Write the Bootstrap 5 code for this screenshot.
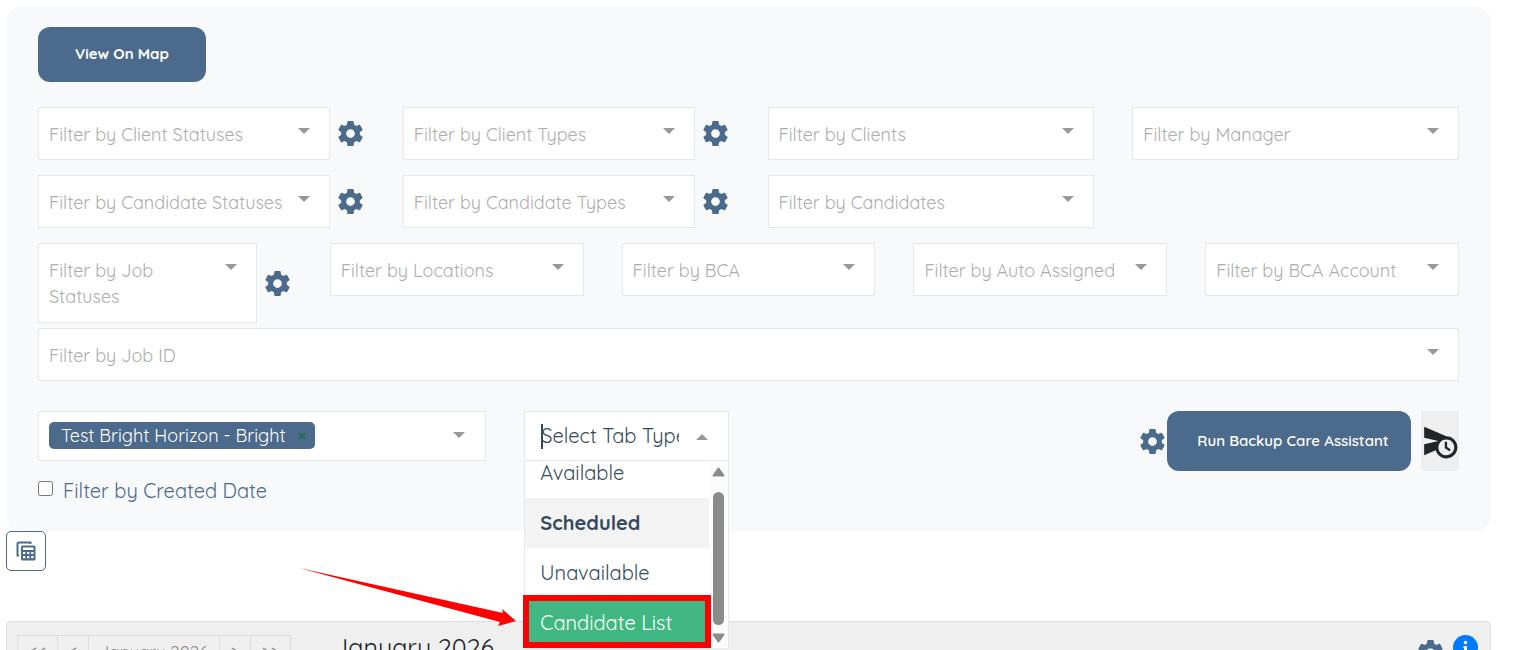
<!DOCTYPE html>
<html lang="en">
<head>
<meta charset="utf-8">
<meta name="viewport" content="width=device-width, initial-scale=1">
<title>Scheduler</title>
<link href="https://cdn.jsdelivr.net/npm/bootstrap@5.3.0/dist/css/bootstrap.min.css" rel="stylesheet">
<style>
  :root { --brand: #4c6a8c; --line: #e8e8e8; }
  body { font-family: Quicksand, Lato, "Open Sans", sans-serif; background: #fff; color: #212529; }
  .page { padding: 7px 26px 0 6px; }
  .filter-panel { background: #f8f9fb; border-radius: 15px; padding: 20px 32px 25px; }
  .filter-row { --bs-gutter-x: 38px; margin-bottom: 15px; }
  .filter-row.tight { margin-bottom: 5px; }
  .filter-row.loose { margin-bottom: 30px; }
  .btn-brand { background: var(--brand); color: #fff; font-size: 15px; font-weight: 600; border: 0; border-radius: 12px; }
  .btn-brand:hover { background: #3f5a78; color: #fff; }
  .btn-map { height: 55px; padding: 0 37px; margin-bottom: 25px; font-weight: 700; }
  .btn-run { height: 60px; width: 244px; padding: 0 0 0 8px; }
  .pick {
    display: block; width: 100%; min-width: 0; min-height: 53px; text-align: left; color: #adadad; font-size: 18px; line-height: 26px;
    border: 1px solid var(--line); border-radius: 0; padding: 13px 46px 11px 10px; appearance: none;
    background: #fff url("data:image/svg+xml,%3Csvg xmlns='http://www.w3.org/2000/svg' viewBox='0 0 12 6'%3E%3Cpath d='M0 0h12L6 6z' fill='%23999'/%3E%3C/svg%3E") no-repeat right 19px top 20px / 12px 6px;
  }
  .pick.two-line { min-height: 80px; }
  .gear { width: 27px; height: 27px; padding: 0; border: 0; background: none; color: var(--brand); flex: none; text-align: left; line-height: 1; }
  .gear svg { width: 25px; height: 25px; display: block; }
  .pick.tag-box { min-height: 50px; height: 50px; padding: 10px; background-position: right 20px top 20px; }
  .tag { display: inline-flex; align-items: center; height: 27px; padding: 0 9px 0 12px; gap: 12px; background: var(--brand); color: #fff; border-radius: 5px; font-size: 18px; white-space: nowrap; vertical-align: top; }
  .tag button { border: 0; background: none; padding: 0; width: 8px; height: 8px; line-height: 0; color: #266d4d; }
  .tag svg { width: 8px; height: 8px; display: block; }
  .date-check { margin-top: 15px; gap: 10px; font-size: 20px; line-height: 30px; color: var(--brand); }
  .date-check input { width: 15px; height: 15px; margin: 0 0 5px; }
  .tab-box { height: 50px; background: #fff; border: 1px solid var(--line); padding: 0 20px 0 16px; gap: 17px; }
  .tab-box input { border: 0; outline: 0; padding: 0; height: 25px; min-width: 0; flex: 1; font-size: 20px; color: #35495e; background: linear-gradient(#35495e, #35495e) no-repeat left / 2px 100%; }
  .tab-box input::placeholder { color: #35495e; opacity: 1; }
  .tab-box svg { width: 12px; height: 6px; flex: none; margin-top: 2px; }
  .tab-menu { top: 50px; left: 19px; right: 19px; height: 188px; border: 1px solid var(--line); border-top: 0; background: #fff; z-index: 5; }
  .tab-list { list-style: none; margin: 0; padding: 0; flex: 1; overflow: hidden; }
  .tab-list li { height: 50px; flex: none; padding: 0 15px; font-size: 20px; line-height: 50px; color: #35495e; white-space: nowrap; }
  .tab-list .picked { background: #f3f3f3; font-weight: 700; }
  .tab-list .current { background: #41b883; color: #fff; }
  .track { width: 19px; background: #fcfcfc; padding: 6px 0 5px; gap: 8px; }
  .track svg { width: 13px; height: 10px; flex: none; }
  .thumb { width: 11px; flex: 1; border-radius: 6px; background: #8b8b8b; margin-top: 7px; }
  .callout { left: -2px; right: 17px; bottom: 0; height: 53px; border: 6px solid #f00; }
  .callout-arrow { right: 100%; bottom: 18px; width: 218px; height: 62px; margin-right: 8px; }
  .send-later { width: 38px; height: 60px; padding: 0; border: 0; background: #efefef; color: #212529; margin-left: 10px; }
  .send-later svg { width: 38px; height: 38px; display: block; }
  .grid-toggle { width: 40px; height: 40px; padding: 0; border: 1px solid var(--brand); border-radius: 5px; background: #fff; color: var(--brand); margin-bottom: 50px; }
  .grid-toggle svg { width: 20px; height: 20px; }
  .calendar { background: #efefef; border: 1px solid #ddd; border-radius: 5px 5px 0 0; padding: 13px 12px 0 10px; min-height: 90px; }
  .pager button { height: 36px; border: 1px solid #ddd; margin-right: -1px; background: none; color: #888; font-size: 17px; line-height: 32px; padding: 0 0 2px; }
  .w-edge { width: 41px; } .w-step { width: 32px; } .w-month { width: 132px; }
  .cal-title { font-size: 25px; line-height: 24px; margin: 0 0 0 44px; font-weight: 400; }
  .info { width: 25px; height: 25px; padding: 0; border: 0; background: none; margin-left: 8px; }
  .info svg { width: 25px; height: 25px; display: block; }
</style>
</head>
<body class="vh-100 overflow-hidden">
<svg class="d-none" aria-hidden="true">
  <symbol id="gear" viewBox="2 2 20 20"><path fill="currentColor" d="M19.43 12.98c.04-.32.07-.64.07-.98s-.03-.66-.07-.98l2.11-1.65c.19-.15.24-.42.12-.64l-2-3.46c-.12-.22-.39-.3-.61-.22l-2.49 1c-.52-.4-1.08-.73-1.69-.98l-.38-2.65C14.46 2.18 14.25 2 14 2h-4c-.25 0-.46.18-.49.42l-.38 2.65c-.61.25-1.17.59-1.69.98l-2.49-1c-.23-.09-.49 0-.61.22l-2 3.46c-.13.22-.07.49.12.64l2.11 1.65c-.04.32-.07.65-.07.98s.03.66.07.98l-2.11 1.65c-.19.15-.24.42-.12.64l2 3.46c.12.22.39.3.61.22l2.49-1c.52.4 1.08.73 1.69.98l.38 2.65c.03.24.24.42.49.42h4c.25 0 .46-.18.49-.42l.38-2.65c.61-.25 1.17-.59 1.69-.98l2.49 1c.23.09.49 0 .61-.22l2-3.46c.12-.22.07-.49-.12-.64l-2.11-1.65zM12 15.5c-1.93 0-3.5-1.57-3.5-3.5s1.57-3.5 3.5-3.5 3.5 1.57 3.5 3.5-1.57 3.5-3.5 3.5z"/></symbol>
</svg>
<main class="page">
  <section class="filter-panel" aria-label="Filters">
    <button type="button" class="btn btn-brand btn-map">View On Map</button>

    <div class="row filter-row">
      <div class="col-3 d-flex align-items-center gap-2">
        <select class="pick" aria-label="Client statuses"><option>Filter by Client Statuses</option></select>
        <button type="button" class="gear" aria-label="Client status settings"><svg><use href="#gear"/></svg></button>
      </div>
      <div class="col-3 d-flex align-items-center gap-2">
        <select class="pick" aria-label="Client types"><option>Filter by Client Types</option></select>
        <button type="button" class="gear" aria-label="Client type settings"><svg><use href="#gear"/></svg></button>
      </div>
      <div class="col-3"><select class="pick" aria-label="Clients"><option>Filter by Clients</option></select></div>
      <div class="col-3"><select class="pick" aria-label="Manager"><option>Filter by Manager</option></select></div>
    </div>

    <div class="row filter-row">
      <div class="col-3 d-flex align-items-center gap-2">
        <select class="pick" aria-label="Candidate statuses"><option>Filter by Candidate Statuses</option></select>
        <button type="button" class="gear" aria-label="Candidate status settings"><svg><use href="#gear"/></svg></button>
      </div>
      <div class="col-3 d-flex align-items-center gap-2">
        <select class="pick" aria-label="Candidate types"><option>Filter by Candidate Types</option></select>
        <button type="button" class="gear" aria-label="Candidate type settings"><svg><use href="#gear"/></svg></button>
      </div>
      <div class="col-3"><select class="pick" aria-label="Candidates"><option>Filter by Candidates</option></select></div>
    </div>

    <div class="row row-cols-5 filter-row tight">
      <div class="col d-flex align-items-center gap-2">
        <button type="button" class="pick two-line" aria-haspopup="listbox">Filter by Job<br>Statuses</button>
        <button type="button" class="gear" aria-label="Job status settings"><svg><use href="#gear"/></svg></button>
      </div>
      <div class="col"><select class="pick" aria-label="Locations"><option>Filter by Locations</option></select></div>
      <div class="col"><select class="pick" aria-label="BCA"><option>Filter by BCA</option></select></div>
      <div class="col"><select class="pick" aria-label="Auto assigned"><option>Filter by Auto Assigned</option></select></div>
      <div class="col"><select class="pick" aria-label="BCA account"><option>Filter by BCA Account</option></select></div>
    </div>

    <div class="row filter-row loose">
      <div class="col-12"><select class="pick" aria-label="Job ID"><option>Filter by Job ID</option></select></div>
    </div>

    <div class="row filter-row mb-0">
      <div class="col-4">
        <div class="pick tag-box" role="combobox" aria-label="Account" aria-expanded="false" tabindex="0">
          <span class="tag">Test Bright Horizon - Bright
            <button type="button" aria-label="Remove"><svg viewBox="0 0 8 8"><path d="M1 1l6 6M7 1L1 7" stroke="currentColor" stroke-width="2"/></svg></button>
          </span>
        </div>
        <div class="d-flex align-items-center date-check">
          <input type="checkbox" id="created"><label for="created">Filter by Created Date</label>
        </div>
      </div>
      <div class="col-2 position-relative">
        <div class="tab-box d-flex align-items-center">
          <input type="text" placeholder="Select Tab Type" aria-label="Tab type">
          <svg viewBox="0 0 12 6"><path d="M0 6h12L6 0z" fill="#999"/></svg>
        </div>
        <div class="tab-menu position-absolute d-flex">
          <ul class="tab-list d-flex flex-column justify-content-end" role="listbox" aria-label="Tab types">
            <li role="option">Available</li>
            <li role="option" class="picked" aria-selected="true">Scheduled</li>
            <li role="option">Unavailable</li>
            <li role="option" class="current">Candidate List</li>
          </ul>
          <div class="track d-flex flex-column align-items-center" aria-hidden="true">
            <svg viewBox="0 0 13 10"><path d="M6.500 1.500L11.500 8.500H1.500Z" fill="#8b8b8b" stroke="#8b8b8b" stroke-width="2" stroke-linejoin="round"/></svg>
            <div class="thumb"></div>
            <svg viewBox="0 0 13 10"><path d="M6.500 8.500L11.500 1.500H1.500Z" fill="#8b8b8b" stroke="#8b8b8b" stroke-width="2" stroke-linejoin="round"/></svg>
          </div>
          <div class="callout position-absolute"></div>
          <svg class="callout-arrow position-absolute" viewBox="0 0 218 62" aria-hidden="true"><path d="M0 0L204 45 203 41 217 53 199 58 201 54Z" fill="#f00"/></svg>
        </div>
      </div>
      <div class="col-6 d-flex justify-content-end align-items-start">
        <div class="d-flex align-items-center">
          <button type="button" class="gear" aria-label="Assistant settings"><svg><use href="#gear"/></svg></button>
          <button type="button" class="btn btn-brand btn-run">Run Backup Care Assistant</button>
          <button type="button" class="send-later" aria-label="Schedule send"><svg viewBox="0 0 24 24" fill="currentColor"><path d="M16.500 12.500H15v4l3 2 .75-1.230-2.250-1.520zM16 9L2 3v7l9 2-9 2v7l7.270-3.110C10.090 20.830 12.790 23 16 23c3.860 0 7-3.140 7-7s-3.140-7-7-7zm0 12c-2.750 0-4.980-2.220-5-4.970v-.070C11.020 13.220 13.250 11 16 11c2.760 0 5 2.240 5 5s-2.240 5-5 5z"/></svg></button>
        </div>
      </div>
    </div>
  </section>

  <button type="button" class="grid-toggle d-flex align-items-center justify-content-center" aria-label="Table view">
    <svg viewBox="0 0 20 20" fill="none"><path d="M14.500 3V1.500H3Q1.500 1.500 1.500 3V14.500H3" stroke="currentColor" stroke-width="2"/><path fill="currentColor" fill-rule="evenodd" d="M6.500 4.500h11.500q1.500 0 1.500 1.500v12q0 1.500-1.500 1.500h-11.500q-1.500 0-1.500-1.500v-12q0-1.500 1.500-1.500zM7 6.500v2.500h10.500v-2.500zM7 11v2h2.300v-2zM11.100 11v2h2.300v-2zM15.200 11v2h2.300v-2zM7 15v2.300h2.300v-2.300zM11.100 15v2.300h2.300v-2.300zM15.200 15v2.300h2.300v-2.300z"/></svg>
  </button>

  <section class="calendar d-flex align-items-start" aria-label="Calendar">
    <div class="pager d-flex">
      <button type="button" class="w-edge">&lt;&lt;</button>
      <button type="button" class="w-step">&lt;</button>
      <button type="button" class="w-month">January 2026</button>
      <button type="button" class="w-step">&gt;</button>
      <button type="button" class="w-edge">&gt;&gt;</button>
    </div>
    <h2 class="cal-title">January 2026</h2>
    <div class="ms-auto d-flex align-items-start">
      <button type="button" class="gear mt-1" aria-label="Calendar settings"><svg><use href="#gear"/></svg></button>
      <button type="button" class="info" aria-label="Information"><svg viewBox="0 0 25 25"><circle cx="12.500" cy="12.500" r="12.500" fill="#007bff"/><circle cx="12.500" cy="7.500" r="1.700" fill="#fff"/><path d="M10.500 11H14v7h1.500v2h-6v-2H11v-5h-.500z" fill="#fff"/></svg></button>
    </div>
  </section>
</main>
<script src="https://cdn.jsdelivr.net/npm/bootstrap@5.3.0/dist/js/bootstrap.bundle.min.js"></script>
</body>
</html>
